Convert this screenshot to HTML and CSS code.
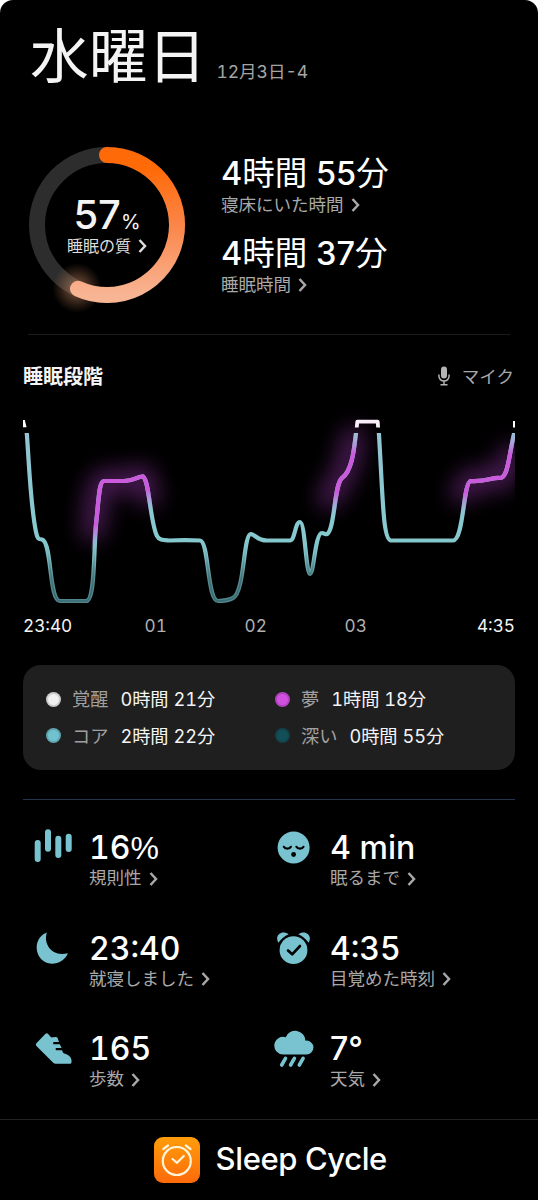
FILE: index.html
```html
<!DOCTYPE html>
<html lang="ja">
<head>
    <meta charset="UTF-8">
    <meta name="viewport" content="width=device-width, initial-scale=1.0">
    <title>Sleep Cycle</title>
    <link rel="stylesheet" href="styles.css">
</head>
<body>

<svg class="defs" width="0" height="0">
    <symbol id="chevron" viewBox="0 0 9 14">
        <path d="M1.5 1 L7 7 L1.5 13" fill="none" stroke="currentColor" stroke-width="2.5"/>
    </symbol>
</svg>

<div class="screen">
    <header class="header">
        <h1>水曜日</h1>
        <span class="date">12月3日-4</span>
    </header>

    <section class="summary">
        <div class="ring">
            <svg viewBox="0 0 196 196" width="196" height="196">
                <defs>
                    <linearGradient id="ringColor" x1="0" y1="0" x2="0" y2="1">
                        <stop offset="0.1" stop-color="#ff6a08"/>
                        <stop offset="0.5" stop-color="#fb8549"/>
                        <stop offset="1" stop-color="#f8b594"/>
                    </linearGradient>
                    <radialGradient id="ringGlow">
                        <stop offset="0" stop-color="#e09a70" stop-opacity="0.6"/>
                        <stop offset="0.5" stop-color="#b57a58" stop-opacity="0.35"/>
                        <stop offset="1" stop-color="#a06a48" stop-opacity="0"/>
                    </radialGradient>
                </defs>
                <circle cx="98" cy="98" r="70" fill="none" stroke="#2d2d2d" stroke-width="16"/>
                <circle cx="68" cy="161" r="25" fill="url(#ringGlow)"/>
                <path d="M98 28 A70 70 0 1 1 69 161.7" fill="none" stroke="url(#ringColor)" stroke-width="16" stroke-linecap="round"/>
            </svg>
            <div class="ring-text">
                <div class="score">57<small>%</small></div>
                <div class="score-label">睡眠の質<svg class="chevron"><use href="#chevron"/></svg></div>
            </div>
        </div>
        <div class="times">
            <div class="stat">
                <div class="value">4<span class="kanji">時間</span> 55<span class="kanji">分</span></div>
                <div class="label">寝床にいた時間<svg class="chevron"><use href="#chevron"/></svg></div>
            </div>
            <div class="stat">
                <div class="value">4<span class="kanji">時間</span> 37<span class="kanji">分</span></div>
                <div class="label">睡眠時間<svg class="chevron"><use href="#chevron"/></svg></div>
            </div>
        </div>
    </section>

    <section class="stages">
        <div class="stages-head">
            <h2>睡眠段階</h2>
            <div class="mic">
                <svg viewBox="0 0 12 20" width="12" height="20">
                    <rect x="3" y="0.5" width="6" height="12" rx="3" fill="#b4b4b4"/>
                    <path d="M0.9 8.5 V10 A5.1 5.1 0 0 0 11.1 10 V8.5 M6 15 V18.5 M2.5 18.8 H9.5" fill="none" stroke="#b4b4b4" stroke-width="1.5"/>
                </svg>
                <span>マイク</span>
            </div>
        </div>

        <svg class="chart" viewBox="23 400 492 210" width="492" height="210">
            <defs>
                <linearGradient id="core" gradientUnits="userSpaceOnUse" x1="0" y1="430" x2="0" y2="603">
                    <stop offset="0" stop-color="#93c4d2"/>
                    <stop offset="0.6" stop-color="#86cad0"/>
                    <stop offset="0.72" stop-color="#80c2c8"/>
                    <stop offset="0.86" stop-color="#568b91"/>
                    <stop offset="1" stop-color="#4f858b"/>
                </linearGradient>
                <linearGradient id="deep" gradientUnits="userSpaceOnUse" x1="0" y1="545" x2="0" y2="590">
                    <stop offset="0" stop-color="#3b6b72" stop-opacity="0"/>
                    <stop offset="1" stop-color="#3b6b72"/>
                </linearGradient>
                <linearGradient id="dreamRise" gradientUnits="userSpaceOnUse" x1="0" y1="525" x2="0" y2="552">
                    <stop offset="0" stop-color="#cb5bdd"/>
                    <stop offset="1" stop-color="#a8b4e0" stop-opacity="0"/>
                </linearGradient>
                <linearGradient id="dreamFall" gradientUnits="userSpaceOnUse" x1="0" y1="490" x2="0" y2="512">
                    <stop offset="0" stop-color="#cb5bdd"/>
                    <stop offset="1" stop-color="#a8b4e0" stop-opacity="0"/>
                </linearGradient>
                <linearGradient id="dreamLate" gradientUnits="userSpaceOnUse" x1="0" y1="433" x2="0" y2="516">
                    <stop offset="0" stop-color="#a8b4e0" stop-opacity="0.3"/>
                    <stop offset="0.25" stop-color="#cb5bdd"/>
                    <stop offset="0.72" stop-color="#cb5bdd"/>
                    <stop offset="1" stop-color="#a8b4e0" stop-opacity="0"/>
                </linearGradient>
                <filter id="glow" filterUnits="userSpaceOnUse" x="0" y="390" width="540" height="220">
                    <feGaussianBlur stdDeviation="11"/>
                </filter>
                <clipPath id="asleep"><rect x="23" y="433" width="492" height="180"/></clipPath>
                <clipPath id="awake"><rect x="23" y="415" width="492" height="12.5"/></clipPath>
                <path id="night" d="M23 418 C25 418 26 426 27 436 C30 480 31 508 36 532 C38 542 40 538 43 540 C52 546 49 601 60 601 H86 C96 601 93 545 97 515 C99 492 100 481 104 481 H124 C134 481 137 477 142 476.500 C149 475 150 523 157 536 C159 540 163 540 169 540.500 C180 540 190 540 200 540.500 C209 541 207 601 218 601 C224 601 230 599.500 233 598 C245 592 243 534 251 534 C256 535 257 540.500 267 540.500 H290 C295 540.500 295 522 300 522 C305 522 306 574 310 574 C314 574 315 533 322 533 C324 533 325 535 327 534 C335 530 334 484 342 478 C352 471 354 450 356 433 L357 421 H378 L379 435 C383 500 383 540.500 391 540.500 H453 C464 540.500 463 481 471 481 C488 482 492 477 500 478 C508 478 509 455 514 434 L515 420"/>
            </defs>

            <g class="glow" filter="url(#glow)">
                <path d="M93 530 C97 492 99 481 105 481 H124 L142 477 L149 496"/>
                <path d="M329 498 L337 484 L342 478 L350 455 L353 438"/>
                <path d="M462 492 L471 481 L502 478 L512 455"/>
            </g>

            <g clip-path="url(#asleep)" fill="none" stroke-linejoin="round">
                <use href="#night" stroke="url(#core)" stroke-width="4.200"/>
                <use href="#night" stroke="url(#deep)" stroke-width="1.600"/>
                <path d="M92.500 555 C94.500 545 94.500 535 97 515 C99 492 100 481 104 481 H124" stroke="url(#dreamRise)" stroke-width="4.200"/>
                <path d="M123 481 H124 C134 481 137 477 142 476.500 C149 475 150 523 157 536" stroke="url(#dreamFall)" stroke-width="4.200"/>
                <path d="M327 534 C335 530 334 484 342 478 C352 471 354 450 356 433" stroke="url(#dreamLate)" stroke-width="4.200"/>
                <path d="M453 540.500 C464 540.500 463 481 471 481 C488 482 492 477 500 478 C508 478 509 455 514 434" stroke="url(#dreamLate)" stroke-width="4.200"/>
            </g>
            <g clip-path="url(#awake)">
                <path d="M23 420 H24.800 L26.600 427.500 H23 Z" fill="#fff"/>
                <path d="M356.500 430 L357.300 421.700 H377.700 L378.300 430" fill="none" stroke="#fbeefb" stroke-width="3.800" stroke-linejoin="round"/>
                <path d="M514 421 V430" stroke="#fff" stroke-width="2"/>
            </g>
        </svg>

        <div class="axis">
            <span class="edge">23:40</span>
            <span>01</span>
            <span>02</span>
            <span>03</span>
            <span class="edge">4:35</span>
        </div>

        <div class="legend">
            <div class="legend-item"><i class="dot awake"></i><span>覚醒</span><b>0時間 21分</b></div>
            <div class="legend-item"><i class="dot dream"></i><span>夢</span><b>1時間 18分</b></div>
            <div class="legend-item"><i class="dot core"></i><span>コア</span><b>2時間 22分</b></div>
            <div class="legend-item"><i class="dot deep"></i><span>深い</span><b>0時間 55分</b></div>
        </div>
    </section>

    <section class="metrics">
        <div class="metric">
            <svg class="icon" viewBox="0 0 40 40">
                <path d="M4.700 14 V30 M15 3.300 V19.700 M25.300 9.700 V26 M35.700 7.700 V20" stroke="#79c3d0" stroke-width="6" stroke-linecap="round"/>
            </svg>
            <div class="stat">
                <div class="value">16<span class="percent">%</span></div>
                <div class="label">規則性<svg class="chevron"><use href="#chevron"/></svg></div>
            </div>
        </div>
        <div class="metric">
            <svg class="icon" viewBox="0 0 40 40">
                <circle cx="19.600" cy="18.500" r="16" fill="#79c3d0"/>
                <path d="M9.800 17.800 C11.100 20.300 15.600 20.300 16.900 17.800 M22.400 17.800 C23.700 20.300 28.200 20.300 29.500 17.800" fill="none" stroke="#000" stroke-width="2.200" stroke-linecap="round"/>
                <circle cx="19.600" cy="25.500" r="2.400" fill="#000"/>
            </svg>
            <div class="stat">
                <div class="value unit">4 min</div>
                <div class="label">眠るまで<svg class="chevron"><use href="#chevron"/></svg></div>
            </div>
        </div>
        <div class="metric">
            <svg class="icon" viewBox="0 0 40 40">
                <path d="M13.900 2.600 C10 14 19 27.500 34.900 23.200 C30 35 13.500 37.500 6.500 27 C0.500 17 5 5.500 13.900 2.600 Z" fill="#79c3d0"/>
            </svg>
            <div class="stat">
                <div class="value">23:40</div>
                <div class="label">就寝しました<svg class="chevron"><use href="#chevron"/></svg></div>
            </div>
        </div>
        <div class="metric">
            <svg class="icon" viewBox="0 0 40 40">
                <circle cx="19.500" cy="20.200" r="13.900" fill="#79c3d0"/>
                <path d="M4.300 12.800 C0 4.500 8.500 -0.500 14.700 4.200 Q8.500 7 4.300 12.800 Z M34.700 12.800 C39 4.500 30.500 -0.500 24.300 4.200 Q30.500 7 34.700 12.800 Z" fill="#79c3d0"/>
                <path d="M14 20.500 L18.200 24.300 L26 16" fill="none" stroke="#000" stroke-width="2.600" stroke-linecap="round" stroke-linejoin="round"/>
            </svg>
            <div class="stat">
                <div class="value">4:35</div>
                <div class="label">目覚めた時刻<svg class="chevron"><use href="#chevron"/></svg></div>
            </div>
        </div>
        <div class="metric">
            <svg class="icon" viewBox="0 0 40 40">
                <path d="M3.400 13.300 L12.500 3.800 Q13.700 2.700 15 3.800 L17.500 6.800 Q18.500 7.600 20 7.300 L22.800 6.900 Q24.200 6.900 24.700 8.200 L26 12 H20.500 Q19.700 13.200 20.500 14.300 H26.800 L28.600 18 H23 Q22 19.100 23 20.300 H29 L30 22.800 C31.500 24 34 24 36 25.800 C38.300 28 38.800 30 38.500 32.200 Q38.300 33.700 37 33.700 H22.500 Q21.500 33.700 20.500 32.900 L3.400 16 Q2.300 14.600 3.400 13.300 Z" fill="#79c3d0"/>
            </svg>
            <div class="stat">
                <div class="value">165</div>
                <div class="label">歩数<svg class="chevron"><use href="#chevron"/></svg></div>
            </div>
        </div>
        <div class="metric">
            <svg class="icon" viewBox="0 0 40 40">
                <path d="M9.200 24.400 A8.800 8.800 0 1 1 11.700 7.200 A10.300 10.300 0 0 1 31.500 10.700 A6.900 6.900 0 1 1 32 24.400 Z" fill="#79c3d0"/>
                <path d="M11.500 28.300 L7.700 35 M20.400 28.300 L16.600 35 M29.100 28.300 L25.300 35" stroke="#79c3d0" stroke-width="3.600" stroke-linecap="round"/>
            </svg>
            <div class="stat">
                <div class="value unit">7°</div>
                <div class="label">天気<svg class="chevron"><use href="#chevron"/></svg></div>
            </div>
        </div>
    </section>

    <footer class="footer">
        <svg viewBox="0 0 46 46" width="46" height="46">
            <defs>
                <linearGradient id="logo" x1="0" y1="0" x2="0" y2="1">
                    <stop offset="0" stop-color="#ff9d0a"/>
                    <stop offset="1" stop-color="#fc6a0a"/>
                </linearGradient>
            </defs>
            <rect width="46" height="46" rx="9" fill="url(#logo)"/>
            <g fill="none" stroke="#fff3d8" stroke-width="2.200" stroke-linecap="round" stroke-linejoin="round">
                <circle cx="22.800" cy="24" r="14"/>
                <path d="M18.500 22 L23 25.800 L29.800 19 M9.300 12 L14 8.500 M31.800 8.500 L36.500 12"/>
            </g>
        </svg>
        <span>Sleep Cycle</span>
    </footer>
</div>

</body>
</html>
```
FILE: styles.css
```css
body {
    margin: 0;
    background-color: #fff;
    color: #f4f4f4;
    font-family: "Inter", "Noto Sans CJK JP", sans-serif;
    font-feature-settings: "tnum";
}
.defs {
    display: block;
}
.screen {
    box-sizing: border-box;
    width: 538px;
    height: 1200px;
    background-color: #000;
    border-radius: 13px 13px 0 0;
    overflow: hidden;
    display: flex;
    flex-direction: column;
}
.header {
    display: flex;
    align-items: baseline;
    gap: 10px;
    height: 127px;
    padding-left: 30px;
}
h1 {
    margin: 15px 0 0;
    font-size: 58.8px;
    line-height: 84px;
    font-weight: 400;
}
.date {
    font-size: 17.5px;
    color: #a5a5a5;
}
.summary {
    display: flex;
    height: 208px;
    margin: 0 28px;
    border-bottom: 1px solid #1c1c1c;
}
.ring {
    display: grid;
    width: 196px;
    height: 196px;
    margin-left: -19px;
}
.ring > * {
    grid-area: 1 / 1;
}
.ring-text {
    display: flex;
    flex-direction: column;
    align-items: center;
    padding-top: 66px;
}
.score {
    font-size: 40px;
    line-height: 44px;
    height: 44px;
    font-weight: 500;
    font-feature-settings: normal;
}
.score small {
    font-size: 20px;
    font-weight: 400;
}
.score-label {
    font-size: 16px;
    line-height: 18px;
    color: #ddd;
    white-space: nowrap;
}
.chevron {
    width: 9px;
    height: 14px;
    margin-left: 7px;
    vertical-align: -1.5px;
}
.times {
    display: flex;
    flex-direction: column;
    gap: 18px;
    padding: 28px 0 0 16px;
}
.times .value {
    font-size: 32.5px;
    font-feature-settings: normal;
}
.value {
    font-size: 32px;
    line-height: 38px;
    font-weight: 500;
    color: #fff;
    white-space: nowrap;
}
.kanji {
    font-weight: 400;
}
.unit {
    font-feature-settings: normal;
}
.percent {
    font-family: "Liberation Sans", Arial, sans-serif;
    font-weight: 400;
    letter-spacing: -1px;
}
.label {
    font-size: 17.5px;
    line-height: 24px;
    color: #a8a8a8;
    white-space: nowrap;
}
.stages {
    padding: 0 23px;
}
.stages-head {
    display: flex;
    justify-content: space-between;
    align-items: center;
    height: 65px;
    padding-top: 16px;
    box-sizing: border-box;
}
h2 {
    margin: 0;
    font-size: 20px;
    font-weight: 700;
}
.mic {
    display: flex;
    align-items: center;
    gap: 12px;
    padding-right: 1px;
    font-size: 17.5px;
    color: #a8a8a8;
}
.chart {
    display: block;
}
.glow {
    fill: none;
    stroke: #a93cc0;
    stroke-width: 22px;
    stroke-linecap: round;
    opacity: 0.45;
}
/* hour labels sit 100px apart, starting from the first full hour */
.axis {
    display: grid;
    grid-template-columns: 121.5px 100px 100px 100px 1fr;
    height: 55px;
    line-height: 32px;
    font-size: 17.2px;
    color: #b0b0b0;
}
.axis .edge {
    color: #f4f4f4;
}
.axis .edge:last-child {
    text-align: right;
}
.legend {
    display: grid;
    grid-template-columns: 229px 1fr;
    grid-auto-rows: 36.5px;
    box-sizing: border-box;
    height: 105px;
    padding: 15px 23px;
    border-radius: 18px;
    background-color: #1f1f1f;
}
.legend-item {
    display: flex;
    align-items: center;
    font-size: 18.2px;
    white-space: nowrap;
}
.legend-item span {
    color: #a0a0a0;
    margin: 0 12px 0 11px;
}
.legend-item b {
    font-weight: 400;
}
.dot {
    box-sizing: border-box;
    width: 15px;
    height: 15px;
    margin-top: 2px;
    border-radius: 50%;
    border: 2px solid rgba(0, 0, 0, 0.15);
}
.awake {
    background-color: #f0f0f0;
}
.dream {
    background-color: #d150df;
}
.core {
    background-color: #71c2cf;
}
.deep {
    background-color: #134f59;
}
.metrics {
    display: grid;
    grid-template-columns: 241px 1fr;
    grid-auto-rows: 100.5px;
    box-sizing: border-box;
    height: 320px;
    margin: 29px 23px 0;
    padding: 29px 0 0 10px;
    border-top: 1px solid #24344e;
}
.metric {
    display: flex;
    gap: 16px;
}
.metric .label {
    margin-top: -1px;
}
.icon {
    width: 40px;
    height: 40px;
}
.footer {
    display: flex;
    justify-content: center;
    align-items: center;
    gap: 15.5px;
    height: 80px;
    padding-left: 3px;
    border-top: 1px solid #242424;
    font-size: 31px;
    font-weight: 500;
    letter-spacing: -0.4px;
    color: #fff;
}
.footer span {
    padding-bottom: 3px;
}
```
